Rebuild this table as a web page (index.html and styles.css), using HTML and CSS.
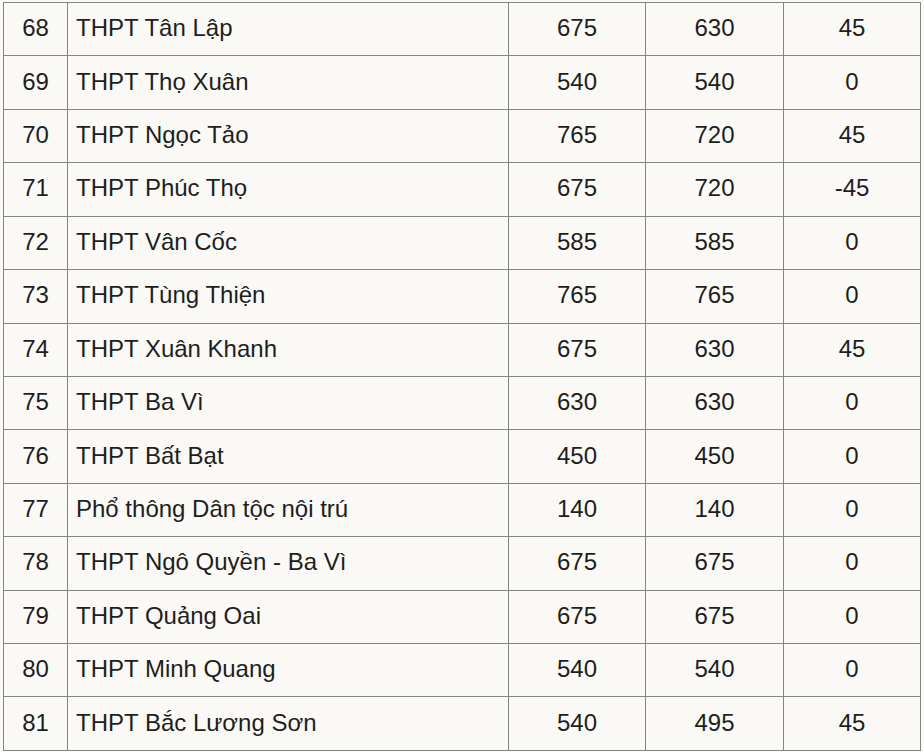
FILE: index.html
```html
<!DOCTYPE html>
<html lang="vi">
<head>
<meta charset="utf-8">
<link rel="stylesheet" href="styles.css">
</head>
<body>
<div class="wrap">
<table class="grid">
<colgroup><col class="c1"><col class="c2"><col class="c3"><col class="c4"><col class="c5"></colgroup>
<tbody>
<tr><td>68</td><td class="name">THPT Tân Lập</td><td>675</td><td>630</td><td>45</td></tr>
<tr><td>69</td><td class="name">THPT Thọ Xuân</td><td>540</td><td>540</td><td>0</td></tr>
<tr><td>70</td><td class="name">THPT Ngọc Tảo</td><td>765</td><td>720</td><td>45</td></tr>
<tr><td>71</td><td class="name">THPT Phúc Thọ</td><td>675</td><td>720</td><td>-45</td></tr>
<tr><td>72</td><td class="name">THPT Vân Cốc</td><td>585</td><td>585</td><td>0</td></tr>
<tr><td>73</td><td class="name">THPT Tùng Thiện</td><td>765</td><td>765</td><td>0</td></tr>
<tr><td>74</td><td class="name">THPT Xuân Khanh</td><td>675</td><td>630</td><td>45</td></tr>
<tr><td>75</td><td class="name">THPT Ba Vì</td><td>630</td><td>630</td><td>0</td></tr>
<tr><td>76</td><td class="name">THPT Bất Bạt</td><td>450</td><td>450</td><td>0</td></tr>
<tr><td>77</td><td class="name">Phổ thông Dân tộc nội trú</td><td>140</td><td>140</td><td>0</td></tr>
<tr><td>78</td><td class="name">THPT Ngô Quyền - Ba Vì</td><td>675</td><td>675</td><td>0</td></tr>
<tr><td>79</td><td class="name">THPT Quảng Oai</td><td>675</td><td>675</td><td>0</td></tr>
<tr><td>80</td><td class="name">THPT Minh Quang</td><td>540</td><td>540</td><td>0</td></tr>
<tr><td>81</td><td class="name">THPT Bắc Lương Sơn</td><td>540</td><td>495</td><td>45</td></tr>
</tbody>
</table>
</div>
</body>
</html>
```
FILE: styles.css
```css
html, body {
  margin: 0;
  padding: 0;
  background: #faf9f5;
}
.wrap {
  padding: 2px 0 0 3px;
}
.grid {
  border-collapse: collapse;
  table-layout: fixed;
  width: 917px;
  font-family: "Liberation Sans", Arial, sans-serif;
  font-size: 24px;
  color: #1e1e1e;
}
.c1 { width: 64px; }
.c2 { width: 441px; }
.c3 { width: 137px; }
.c4 { width: 138px; }
.c5 { width: 137px; }
.grid td {
  border: 1px solid #858585;
  height: 53.43px;
  padding: 0 0 2px 0;
  text-align: center;
  vertical-align: middle;
  box-sizing: border-box;
}
.grid td.name {
  text-align: left;
  padding-left: 8px;
}
```
